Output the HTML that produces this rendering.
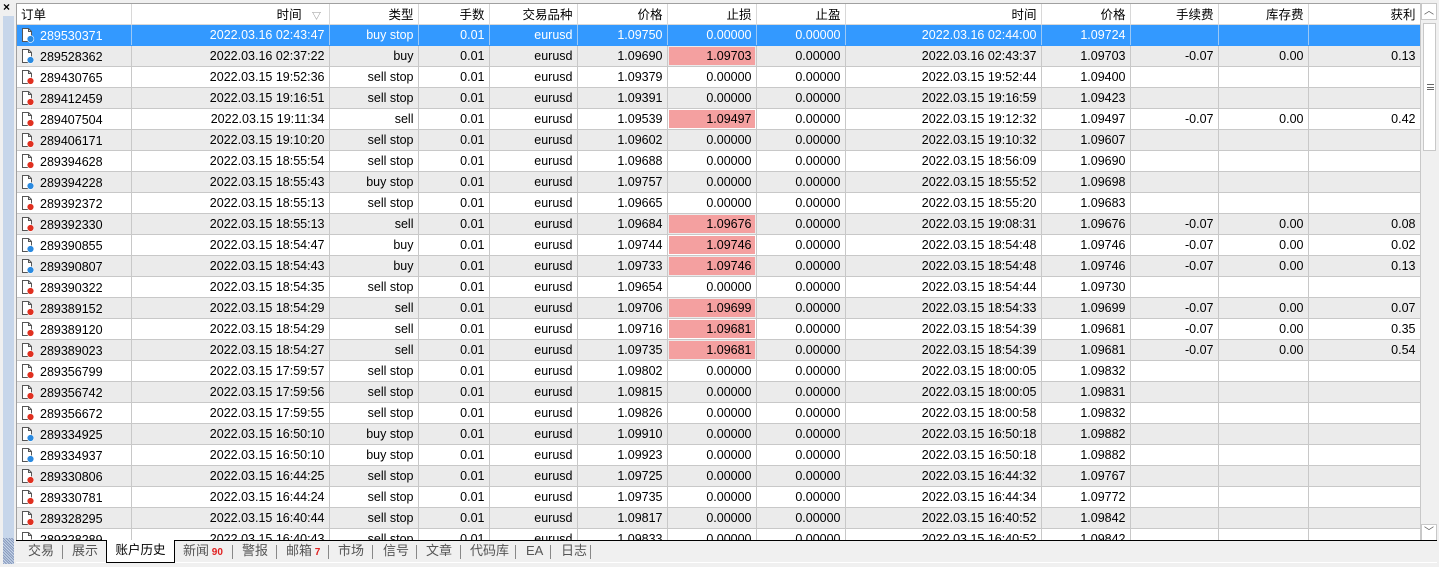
<!DOCTYPE html>
<html><head><meta charset="utf-8">
<style>
*{margin:0;padding:0;box-sizing:border-box}
body{width:1439px;height:567px;background:#f0f0f0;font-family:"Liberation Sans","Noto Sans CJK SC",sans-serif;font-size:12.5px;color:#000;position:relative;overflow:hidden}
#strip{position:absolute;left:0;top:0;width:16px;height:567px;background:#f0f0f0}
#strip .bar{position:absolute;left:3px;top:16px;width:11px;height:548px;background:#c7d6ea}
#strip .x{position:absolute;left:3px;top:0;font-size:12px;font-weight:bold}
#strip .v{position:absolute;left:3px;top:538px;width:11px;height:26px;font-size:8px;line-height:8px;writing-mode:vertical-rl;color:#334;background:repeating-linear-gradient(45deg,#8899bb 0 1px,#c7d6ea 1px 2px)}
#tbl{position:absolute;left:16px;top:3px;width:1421px;height:538px;background:#fff;border-top:1px solid #a0a0a0;border-left:1px solid #a0a0a0;overflow:hidden}
table{border-collapse:collapse;table-layout:fixed;position:absolute;left:0;top:0}
td,th{height:21px;padding:0 4px;white-space:nowrap;overflow:hidden;text-align:right;border-right:1px solid #c8c8c8;border-bottom:1px solid #c8c8c8;font-weight:normal}
th{background:#fff;height:20px;border-right:1px solid #d8d8d8;border-bottom:1px solid #d8d8d8}
th:first-child,td:first-child{text-align:left}
tr.g td{background:#ebebeb}
tr.sel td{background:#3399ff;color:#fff;border-right-color:#9cc8f5;border-bottom-color:#3399ff}
td.p{background:#f4a0a0 !important;box-shadow:inset 0 0 0 1px #fff}
tr.g td.p{box-shadow:inset 0 0 0 1px #ebebeb}
.ic{display:inline-block;vertical-align:-3px;margin-right:5px}
#sb{position:absolute;left:1420px;top:3px;width:17px;height:538px;background:#f0f0f0;border-left:1px solid #c8c8c8}
#sb .up,#sb .dn{position:absolute;left:0;width:16px;height:17px;background:#fff;border:1px solid #c8c8c8;font-size:10px;text-align:center;line-height:15px;color:#555}
#sb .up{top:0}#sb .dn{bottom:0}
#sb .th{position:absolute;left:2px;top:20px;width:13px;height:128px;background:#fff;border:1px solid #c8c8c8}
#sb .th i{position:absolute;left:3px;top:60px;width:7px;height:6px;border-top:1px solid #666;border-bottom:1px solid #666}
#sb .th i:after{content:"";position:absolute;left:0;top:2px;width:7px;border-top:1px solid #666}
#line{position:absolute;left:16px;top:540px;width:1421px;height:1px;background:#000}
#tabs{position:absolute;left:16px;top:541px;height:22px;width:1421px;background:#f0f0f0;border-bottom:1px solid #fff}
.t{position:absolute;top:0;height:22px;line-height:20px;color:#555;font-size:13px}
.sep{position:absolute;top:4px;width:1px;height:14px;background:#888}
.act{position:absolute;left:90px;top:-1px;width:69px;height:23px;background:#fff;border:1px solid #000;border-top:none;color:#000;text-align:center;line-height:21px}
.n{color:#e02020;font-size:10px;font-weight:bold}
</style></head><body>
<div id="strip"><div class="bar"></div><div class="x">×</div><div class="v"></div></div>
<div id="tbl"><table id="t"><colgroup>
<col style="width:114px"><col style="width:198px"><col style="width:89px"><col style="width:71px"><col style="width:88px"><col style="width:90px"><col style="width:89px"><col style="width:89px"><col style="width:196px"><col style="width:89px"><col style="width:88px"><col style="width:90px"><col style="width:112px"></colgroup>
<tr><th>订单</th><th>时间 &nbsp;&nbsp;<span style="font-size:9px;color:#777">▽</span>&nbsp;</th><th>类型</th><th>手数</th><th>交易品种</th><th>价格</th><th>止损</th><th>止盈</th><th>时间</th><th>价格</th><th>手续费</th><th>库存费</th><th>获利</th></tr>
</table></div>
<div id="sb"><div class="up">︿</div><div class="th"><i></i></div><div class="dn">﹀</div></div>
<div id="line"></div>
<div id="tabs">
<span class="t" style="left:12px">交易</span><span class="sep" style="left:46px"></span>
<span class="t" style="left:56px">展示</span>
<span class="act">账户历史</span>
<span class="t" style="left:167px">新闻<span class="n"> 90</span></span><span class="sep" style="left:216px"></span>
<span class="t" style="left:226px">警报</span><span class="sep" style="left:260px"></span>
<span class="t" style="left:270px">邮箱<span class="n"> 7</span></span><span class="sep" style="left:312px"></span>
<span class="t" style="left:322px">市场</span><span class="sep" style="left:356px"></span>
<span class="t" style="left:367px">信号</span><span class="sep" style="left:400px"></span>
<span class="t" style="left:410px">文章</span><span class="sep" style="left:444px"></span>
<span class="t" style="left:454px">代码库</span><span class="sep" style="left:499px"></span>
<span class="t" style="left:510px">EA</span><span class="sep" style="left:534px"></span>
<span class="t" style="left:545px">日志</span><span class="sep" style="left:574px"></span>
</div>
<script>
var D=[
["289530371","2022.03.16 02:43:47","buy stop","1.09750","","2022.03.16 02:44:00","1.09724","","","",1],
["289528362","2022.03.16 02:37:22","buy","1.09690","1.09703","2022.03.16 02:43:37","1.09703","-0.07","0.00","0.13",1],
["289430765","2022.03.15 19:52:36","sell stop","1.09379","","2022.03.15 19:52:44","1.09400","","","",0],
["289412459","2022.03.15 19:16:51","sell stop","1.09391","","2022.03.15 19:16:59","1.09423","","","",0],
["289407504","2022.03.15 19:11:34","sell","1.09539","1.09497","2022.03.15 19:12:32","1.09497","-0.07","0.00","0.42",0],
["289406171","2022.03.15 19:10:20","sell stop","1.09602","","2022.03.15 19:10:32","1.09607","","","",0],
["289394628","2022.03.15 18:55:54","sell stop","1.09688","","2022.03.15 18:56:09","1.09690","","","",0],
["289394228","2022.03.15 18:55:43","buy stop","1.09757","","2022.03.15 18:55:52","1.09698","","","",1],
["289392372","2022.03.15 18:55:13","sell stop","1.09665","","2022.03.15 18:55:20","1.09683","","","",0],
["289392330","2022.03.15 18:55:13","sell","1.09684","1.09676","2022.03.15 19:08:31","1.09676","-0.07","0.00","0.08",0],
["289390855","2022.03.15 18:54:47","buy","1.09744","1.09746","2022.03.15 18:54:48","1.09746","-0.07","0.00","0.02",1],
["289390807","2022.03.15 18:54:43","buy","1.09733","1.09746","2022.03.15 18:54:48","1.09746","-0.07","0.00","0.13",1],
["289390322","2022.03.15 18:54:35","sell stop","1.09654","","2022.03.15 18:54:44","1.09730","","","",0],
["289389152","2022.03.15 18:54:29","sell","1.09706","1.09699","2022.03.15 18:54:33","1.09699","-0.07","0.00","0.07",0],
["289389120","2022.03.15 18:54:29","sell","1.09716","1.09681","2022.03.15 18:54:39","1.09681","-0.07","0.00","0.35",0],
["289389023","2022.03.15 18:54:27","sell","1.09735","1.09681","2022.03.15 18:54:39","1.09681","-0.07","0.00","0.54",0],
["289356799","2022.03.15 17:59:57","sell stop","1.09802","","2022.03.15 18:00:05","1.09832","","","",0],
["289356742","2022.03.15 17:59:56","sell stop","1.09815","","2022.03.15 18:00:05","1.09831","","","",0],
["289356672","2022.03.15 17:59:55","sell stop","1.09826","","2022.03.15 18:00:58","1.09832","","","",0],
["289334925","2022.03.15 16:50:10","buy stop","1.09910","","2022.03.15 16:50:18","1.09882","","","",1],
["289334937","2022.03.15 16:50:10","buy stop","1.09923","","2022.03.15 16:50:18","1.09882","","","",1],
["289330806","2022.03.15 16:44:25","sell stop","1.09725","","2022.03.15 16:44:32","1.09767","","","",0],
["289330781","2022.03.15 16:44:24","sell stop","1.09735","","2022.03.15 16:44:34","1.09772","","","",0],
["289328295","2022.03.15 16:40:44","sell stop","1.09817","","2022.03.15 16:40:52","1.09842","","","",0],
["289328289","2022.03.15 16:40:43","sell stop","1.09833","","2022.03.15 16:40:52","1.09842","","","",0]];
var h="";
D.forEach(function(r,i){
var c=r[10]?"#2a8ae0":"#e03020";
var ic='<svg class="ic" width="14" height="16" viewBox="0 0 14 16"><path d="M1.5 1.5h6l3 3v10h-9z" fill="#fff" stroke="#555"/><path d="M7.5 1.5v3h3" fill="none" stroke="#555"/><circle cx="9.5" cy="12" r="3.4" fill="'+c+'" stroke="#fff" stroke-width=".6"/></svg>';
var cls=i==0?"sel":(i%2?"g":"");
h+='<tr class="'+cls+'"><td>'+ic+r[0]+'</td><td>'+r[1]+'</td><td>'+r[2]+'</td><td>0.01</td><td>eurusd</td><td>'+r[3]+'</td>'+
(r[4]?'<td class="p">'+r[4]+'</td>':'<td>0.00000</td>')+'<td>0.00000</td><td>'+r[5]+'</td><td>'+r[6]+'</td><td>'+r[7]+'</td><td>'+r[8]+'</td><td>'+r[9]+'</td></tr>';
});
document.getElementById("t").insertAdjacentHTML("beforeend",h);
</script>
</body></html>
